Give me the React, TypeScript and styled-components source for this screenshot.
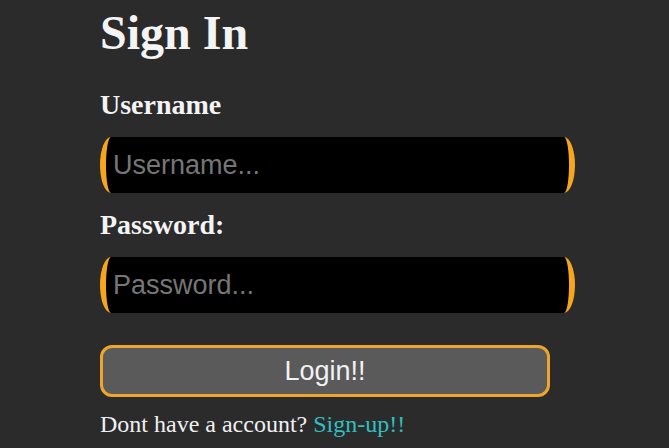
import React from "react";
import styled, { createGlobalStyle } from "styled-components";

const GlobalStyle = createGlobalStyle`
  html, body {
    margin: 0;
    padding: 0;
    background: #2b2b2b;
  }
  body {
    font-family: "Liberation Serif", "Times New Roman", serif;
    color: #f2f2f2;
  }
`;

const Page = styled.div`
  min-height: 448px;
  box-sizing: border-box;
  padding: 5px 0 0 100px;
  background: #2b2b2b;
`;

const Form = styled.form`
  display: flex;
  flex-direction: column;
  align-items: flex-start;
  width: 475px;
`;

const Title = styled.h1`
  margin: 0;
  font-family: "Liberation Serif", "Times New Roman", serif;
  font-weight: bold;
  font-size: 48px;
  line-height: 56px;
  color: #f4f4f4;
`;

const Label = styled.label<{ $top: number }>`
  display: block;
  margin-top: ${(p) => p.$top}px;
  font-family: "Liberation Serif", "Times New Roman", serif;
  font-weight: bold;
  font-size: 28px;
  line-height: 32px;
  color: #f4f4f4;
`;

const Input = styled.input`
  box-sizing: border-box;
  width: 475px;
  height: 56px;
  margin-top: 16px;
  padding: 0 7px;
  background: #000;
  border: none;
  border-left: 6px solid #f5a51e;
  border-right: 6px solid #f5a51e;
  border-radius: 11px / 28px;
  font-family: "Liberation Sans", Arial, sans-serif;
  font-size: 27px;
  color: #eee;
  outline: none;

  &::placeholder {
    color: #767676;
  }
`;

const Button = styled.button`
  box-sizing: border-box;
  width: 450px;
  height: 52px;
  margin-top: 32px;
  background: #5a5a5a;
  border: 3px solid #eda62c;
  border-radius: 12px;
  font-family: "Liberation Sans", Arial, sans-serif;
  font-size: 27px;
  color: #f2f2f2;
  cursor: pointer;
`;

const Footer = styled.p`
  margin: 13px 0 0;
  font-family: "Liberation Serif", "Times New Roman", serif;
  font-size: 24px;
  line-height: 28px;
  color: #f0f0f0;
`;

const SignUp = styled.a`
  color: #2fc0c0;
  text-decoration: none;
`;

export default function App() {
  return (
    <>
      <GlobalStyle />
      <Page>
        <Form onSubmit={(e) => e.preventDefault()}>
          <Title>Sign In</Title>
          <Label $top={28} htmlFor="username">Username</Label>
          <Input id="username" type="text" placeholder="Username..." />
          <Label $top={16} htmlFor="password">Password:</Label>
          <Input id="password" type="password" placeholder="Password..." />
          <Button type="submit">Login!!</Button>
          <Footer>
            Dont have a account? <SignUp href="#">Sign-up!!</SignUp>
          </Footer>
        </Form>
      </Page>
    </>
  );
}
